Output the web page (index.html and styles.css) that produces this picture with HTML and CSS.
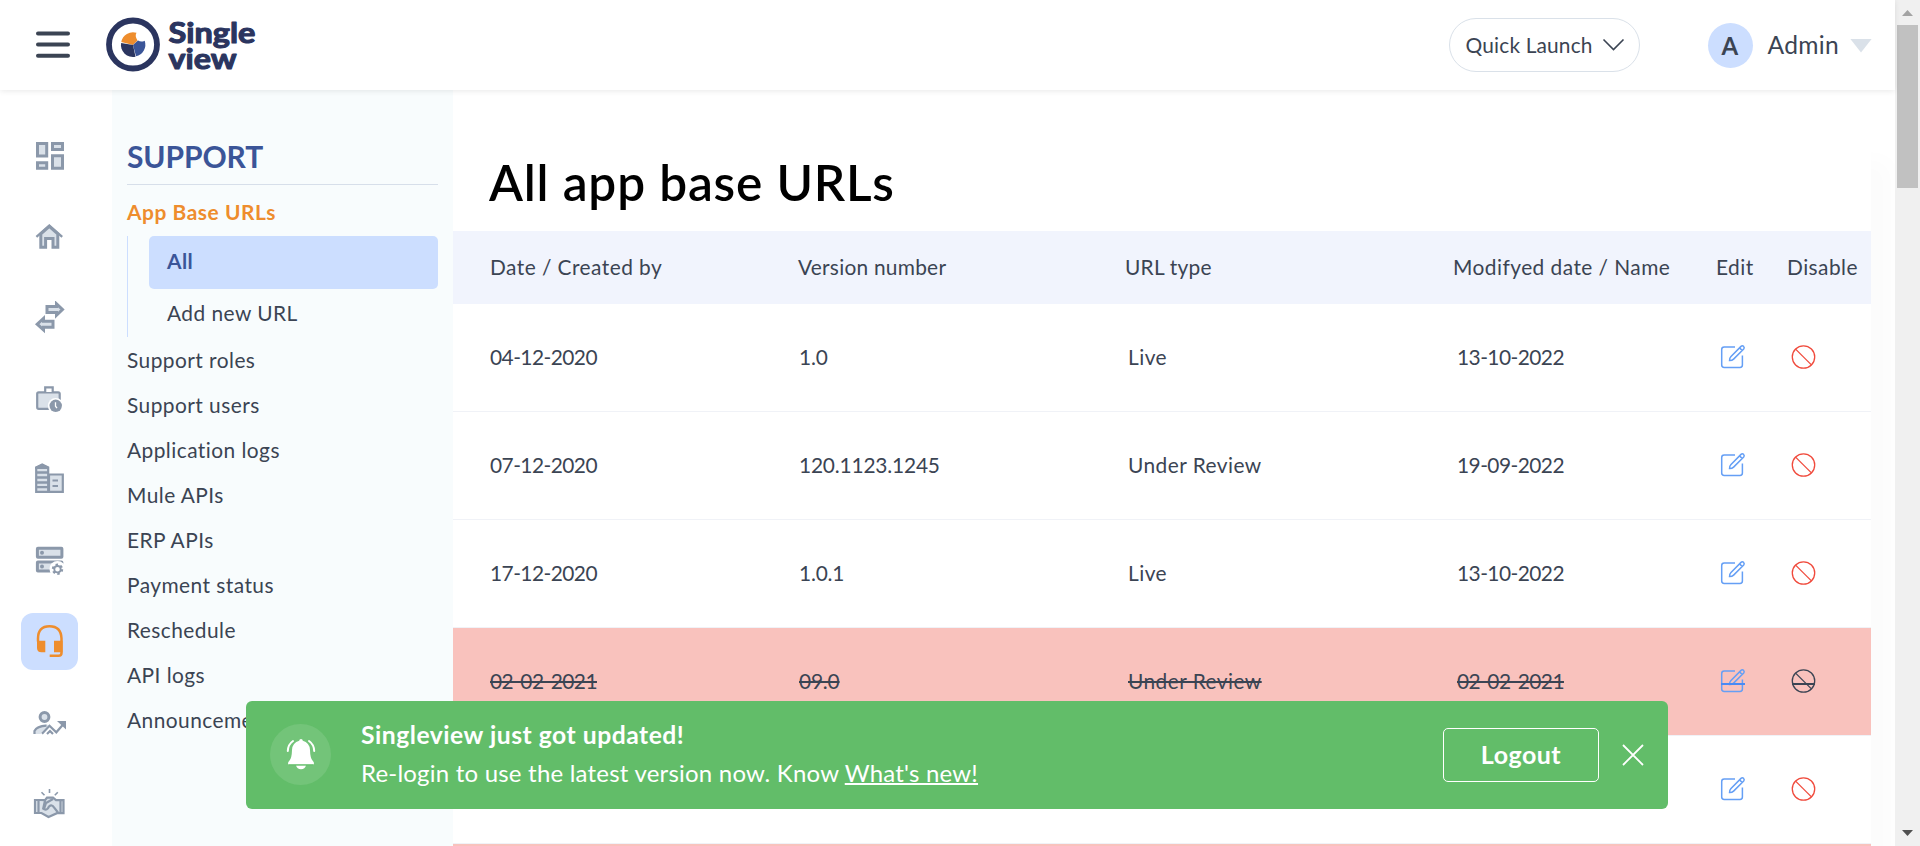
FILE: index.html
```html
<!DOCTYPE html>
<html lang="en">
<head>
<meta charset="utf-8">
<title>Singleview - All app base URLs</title>
<link rel="stylesheet" href="styles.css">
</head>
<body>
<svg class="defs" width="0" height="0">
  <symbol id="edit" viewBox="0 0 26 26">
    <g fill="none" stroke="#659ff5" stroke-width="1.5">
      <path d="M15 3H4.2Q1.7 3 1.7 5.500V21Q1.700 23.400 4.200 23.400H20Q22.400 23.400 22.400 21V11.500"/>
      <path d="M9.500 16.600Q9.400 14.300 11 12.600L21 2.400Q22.300 1.200 23.600 2.400Q24.800 3.700 23.700 5L13.600 15.100Q12 16.700 9.500 16.600zM19.600 3.900L22.200 6.500"/>
    </g>
  </symbol>
  <symbol id="ban" viewBox="0 0 26 26">
    <g fill="none" stroke="currentColor" stroke-width="1.300"><circle cx="12.500" cy="13" r="11.200"/><path d="M4.600 5.100L20.400 20.900"/></g>
  </symbol>
</svg>

<div class="window">
  <div class="page">
    <header class="topbar">
      <svg class="menu" width="36" height="24" viewBox="0 0 36 24"><path d="M3 .4h30M3 11.500h30M3 22.800h30"/></svg>
      <svg class="logo" width="154" height="56" viewBox="0 0 154 56">
        <circle cx="28" cy="27.500" r="24" fill="none" stroke="#2b355f" stroke-width="5.800"/>
        <path d="M28 28L16.300 25A12 12 0 0 1 31.500 15.800Q29.500 19 32.500 23.500z" fill="#ee8d2d"/>
        <path d="M28 28L33 23.500Q36 25.500 39.700 23.700A12 12 0 0 1 31 39.300z" fill="#3b5598"/>
        <path d="M28 28L16.100 26A12 12 0 0 0 30.500 39.700z" fill="#2b355f"/>
        <g class="logo-text"><text x="63.500" y="25.700" textLength="87" lengthAdjust="spacingAndGlyphs">Single</text><text x="63.500" y="51.500" textLength="68" lengthAdjust="spacingAndGlyphs">view</text></g>
      </svg>
      <button class="launch">Quick Launch
        <svg width="23" height="14" viewBox="0 0 23 14"><path d="M1.500 1.500l10 10 10-10"/></svg>
      </button>
      <span class="avatar">A</span>
      <span class="user">Admin</span>
      <span class="caret"></span>
    </header>

    <div class="body">
      <nav class="rail">
        <a><svg viewBox="0 0 33 33"><path d="M4.500 4.500h9.200V17H4.500zM19.500 4.500h10v6h-10zM4.500 23.700h9.200v5.500H4.500zM19.500 16.700h10v12.500h-10z"/></svg></a>
        <a><svg viewBox="0 0 33 33"><path d="M7.800 27.300V14l8.500-7.600 8.500 7.600v13.300H20V18.500h-7.400v8.800z"/><path class="line" d="M3.400 16.800L16.300 5.500l12.900 11.300"/></svg></a>
        <a><svg viewBox="0 0 33 33"><path d="M14 5.600h9.500V2.800l6 5.700-6 5.800v-2.700H14z"/><path d="M20 20.300h-9.500v-2.800l-6.300 5.700 6.300 5.700v-2.700H20z"/></svg></a>
        <a><svg viewBox="0 0 33 33"><rect class="thin" x="4.200" y="10.300" width="22.500" height="16.500" rx="1.500"/><path class="thin" fill="#fff" d="M12.200 10V5.300h7.500V10"/><circle class="dot" cx="22.700" cy="23.800" r="7.800" fill="#fff"/><circle class="solid" cx="22.700" cy="23.800" r="6.200"/><path class="hand" d="M22.500 20.200v4l1.500 2"/></svg></a>
        <a><svg viewBox="0 0 33 33"><path class="thin" d="M3.200 4.500l6-3 6 3v24.300h-12zM16 11.500h13.800v17.300H16z"/><path class="solid" d="M2 4L9 1l7 3v2H2z"/><path class="line" d="M3 9.500h12M3 14.500h12M3 19.500h12M3 24.200h12"/><path class="line thin" d="M19.500 17.500h5.500M19.500 23h5.500"/></svg></a>
        <a><svg viewBox="0 0 33 33"><rect x="4.400" y="4.200" width="24.500" height="9" rx=".5"/><rect x="4.400" y="18" width="24.500" height="9" rx=".5"/><circle class="solid" cx="9" cy="8.800" r="2"/><circle class="solid" cx="9" cy="22.500" r="2"/><circle class="dot white" cx="24.500" cy="25" r="8"/><circle class="gear" cx="24.500" cy="25.200" r="4.600"/><circle class="ring" cx="24.500" cy="25.200" r="3.200"/></svg></a>
        <a class="active"><svg viewBox="0 0 33 33"><path class="head" d="M5 16.500V13.500Q5 1.300 16.500 1.300T28.500 13.500V28Q28.500 30.800 25.500 30.800H16.700"/><path class="ear" d="M4 15.700h8.300v11.500H8.500Q4 27.200 4 23zM21 15.700h8.500v11.500H21z"/></svg></a>
        <a><svg viewBox="0 0 33 33"><circle cx="11.500" cy="11" r="4.400"/><path class="nofill-stroke" d="M.7 28v-3.500Q3.500 19 13 18.500L16 19 7.500 28z"/><path class="line thin" d="M1.500 28v-3q2.500-4.800 12-5.300M9 27.800l7.500-8 6.800 6.500 7-8"/><path class="line thin" d="M14 28l3-3 3 3"/><path class="solid" d="M24 15h9v8.500z"/></svg></a>
        <a><svg viewBox="0 0 33 33"><path class="thin" d="M2 13h5l5 .2 2-2.500h6l3 2.500h7.500v13H24l-8.500 3.800L8.500 26H2z"/><path class="line thin" d="M5.500 13v13M27.500 13v13M12 13.500l-2 9M20 12l-7 4-2 6q3 2 5-2.500 3-2.500 5 1l4 5"/><path class="line fine" d="M16.500 2v4M8.500 5.200l3 3M24.800 5.200l-3 3"/></svg></a>
      </nav>

      <aside class="side">
        <h2>SUPPORT</h2>
        <a class="group">App Base URLs</a>
        <div class="tree"><a class="current">All</a><a class="sub">Add new URL</a></div>
        <a class="item">Support roles</a>
        <a class="item">Support users</a>
        <a class="item">Application logs</a>
        <a class="item">Mule APIs</a>
        <a class="item">ERP APIs</a>
        <a class="item">Payment status</a>
        <a class="item">Reschedule</a>
        <a class="item">API logs</a>
        <a class="item">Announcement</a>
      </aside>

      <main class="content">
        <h1>All app base URLs</h1>
        <div class="row head-row"><span>Date / Created by</span><span class="narrow">Version number</span><span class="narrow">URL type</span><span>Modifyed date / Name</span><span>Edit</span><span>Disable</span></div>
        <div class="row"><span class="date">04-12-2020</span><span class="ver">1.0</span><span>Live</span><span class="date">13-10-2022</span><svg><use href="#edit"/></svg><svg><use href="#ban"/></svg></div>
        <div class="row"><span class="date">07-12-2020</span><span class="ver">120.1123.1245</span><span>Under Review</span><span class="date">19-09-2022</span><svg><use href="#edit"/></svg><svg><use href="#ban"/></svg></div>
        <div class="row"><span class="date">17-12-2020</span><span class="ver">1.0.1</span><span>Live</span><span class="date">13-10-2022</span><svg><use href="#edit"/></svg><svg><use href="#ban"/></svg></div>
        <div class="row disabled"><span class="date"><s>02-02-2021</s></span><span class="ver"><s>09.0</s></span><span><s>Under Review</s></span><span class="date"><s>02-02-2021</s></span><svg><use href="#edit"/><path d="M1 16h24" stroke="#4a8af4" stroke-width="2"/></svg><svg><use href="#ban"/><path d="M1 16h23" stroke="#3b4453" stroke-width="2"/></svg></div>
        <div class="row"><span></span><span></span><span></span><span></span><svg><use href="#edit"/></svg><svg><use href="#ban"/></svg></div>
        <div class="row disabled"></div>
      </main>
    </div>
  </div>

  <div class="scrollbar"><span class="up"></span><span class="thumb"></span><span class="down"></span></div>

  <div class="toast">
    <span class="bell"><svg width="30" height="32" viewBox="0 0 30 32"><path fill="#fff" d="M15 1q1.700 0 1.800 1.800Q23.500 4.500 24 12q.2 8 2.500 10.500 1.500 1.500 1.500 2.800 0 1.200-1.200 1.200H3.200Q2 26.500 2 25.300q0-1.300 1.500-2.800Q5.800 20 6 12q.5-7.500 7.200-9.200Q13.300 1 15 1zM10 27.500h10q-1 3.700-5 3.700t-5-3.700z"/><path fill="none" stroke="#62bd69" stroke-width="1" d="M3 26.900h24"/><path fill="none" stroke="#fff" stroke-width="2" stroke-linecap="round" d="M7 3Q2 6.500 1.800 13M23 3q5 3.500 5.200 10"/></svg></span>
    <div class="message"><strong>Singleview just got updated!</strong><p>Re-login to use the latest version now. Know <a>What's new!</a></p></div>
    <button class="logout">Logout</button>
    <svg class="close" width="22" height="22" viewBox="0 0 22 22"><path d="M1 1l20 20M21 1L1 21"/></svg>
  </div>
</div>
</body>
</html>
```
FILE: styles.css
```css
* { box-sizing: border-box; }
body { margin: 0; background: #fff; color: #3b4453; font: 400 20.900px "Lato", "Noto Sans", sans-serif; letter-spacing: .45px; }
h1, h2, p { margin: 0; }
.defs { display: none; }
.window { position: relative; display: flex; width: 1920px; height: 846px; overflow: hidden; }
.page { display: flex; flex-direction: column; width: 1895px; height: 846px; }

/* Top bar */
.topbar { position: relative; display: flex; align-items: center; flex: none; height: 90px; padding: 0 23px 0 35px; background: #fff; box-shadow: 0 1px 6px rgba(0, 0, 0, .09); }
.menu { overflow: visible; }
.menu path { stroke: #3b4453; stroke-width: 4; stroke-linecap: round; }
.logo { margin: 0 auto 0 34px; overflow: visible; }
.logo-text { font: 700 28.500px "Lato", sans-serif; letter-spacing: 0; fill: #2b355f; stroke: #2b355f; stroke-width: 1.100px; stroke-linejoin: round; }
.launch { display: flex; align-items: center; justify-content: space-between; width: 191px; height: 54px; padding: 0 14px 1px 16px; border: 1px solid #dae1e9; border-radius: 27px; background: #fff; color: inherit; font: inherit; letter-spacing: .15px; }
.launch svg, .close { fill: none; stroke: #3b4453; stroke-width: 1.600; }
.avatar { display: grid; place-items: center; width: 45px; height: 45px; margin: 1px 0 0 68px; border-radius: 50%; background: #ccdeff; font-size: 24px; font-weight: 700; }
.user { margin: -2px 11px 0 15px; font-size: 24.600px; letter-spacing: .28px; }
.caret { width: 22px; height: 14px; margin-top: 1px; background: #dae1e9; clip-path: polygon(0 0, 100% 0, 50% 100%); }

.body { display: flex; flex: 1; min-height: 0; }

/* Icon rail */
.rail { display: flex; flex: none; flex-direction: column; gap: 24px; width: 112px; padding: 37px 0 0 21px; }
.rail a { display: grid; flex: none; place-items: center; width: 57px; height: 57px; border-radius: 12px; }
.rail .active { background: #ccdeff; }
.rail svg { width: 33px; height: 33px; fill: #dae1e9; stroke: #8b98aa; stroke-width: 3; }
.rail .line { fill: none; stroke-width: 2.300; }
.rail .thin { stroke-width: 2.200; }
.rail .fine { stroke-width: 1.600; }
.rail .solid { fill: #8b98aa; stroke: none; }
.rail .dot, .rail .nofill-stroke { stroke: none; }
.rail .white { fill: #fff; }
.rail .hand { fill: none; stroke: #fff; stroke-width: 1.300; }
.rail .gear { fill: none; stroke-width: 2.200; stroke-dasharray: 2.400 2.417; }
.rail .ring { fill: #fff; stroke-width: 1.800; }
.rail .head { fill: none; stroke: #ee8d2d; stroke-width: 2.500; }
.rail .ear { fill: #ee8d2d; stroke: none; }

/* Support menu */
.side { display: flex; flex: none; flex-direction: column; width: 341px; padding: 40px 15px 0; background: #f8fcfd; }
.side h2 { flex: none; height: 55px; padding-top: 1px; border-bottom: 1px solid #d7dfea; color: #3b5598; font-size: 30px; font-weight: 700; line-height: 51px; letter-spacing: -.1px; }
.group { padding-top: 3px; color: #ee8d2d; font-weight: 700; line-height: 48px; letter-spacing: .56px; }
.tree { display: flex; flex-direction: column; padding-left: 21px; border-left: 1px solid #ccdeff; }
.tree a { padding-left: 18px; }
.current { height: 53px; border-radius: 5px; background: #ccdeff; color: #3b5598; font-weight: 700; line-height: 50px; }
.sub { height: 48px; line-height: 47px; }
.item { flex: none; height: 45px; line-height: 45px; }

/* Table */
.content { width: 1418px; overflow: visible; box-shadow: 20px 70px 22px rgba(0, 0, 0, .015); }
h1 { padding: 62px 0 19px 36px; color: #000; font-size: 49.500px; font-weight: 600; line-height: 60px; letter-spacing: .850px; }
.row { display: grid; grid-template-columns: 309px 329px 329px 263px 71px auto; align-items: center; height: 108px; padding: 0 0 1px 37px; border-bottom: 1px solid #f0f2f7; background: #fff; white-space: nowrap; }
.row span { padding-bottom: 2px; }
.head-row { grid-template-columns: 308px 327px 328px 263px 71px auto; height: 73px; border: 0; background: #f1f4fd; }
.narrow { letter-spacing: .24px; }
.row svg { width: 26px; height: 26px; color: #f04a3c; }
.row.disabled { background: #f9c2bd; }
.row.disabled svg { color: #3b4453; }
.date { letter-spacing: -.55px; }
.ver { letter-spacing: -.18px; }
s { text-decoration-thickness: 2px; }

/* Update notice */
.toast { position: absolute; left: 246px; top: 701px; display: flex; align-items: center; width: 1422px; height: 108px; padding: 0 24px; border-radius: 6px; background: #62bd69; color: #fff; font-size: 24px; }
.bell { display: grid; place-items: center; width: 61px; height: 61px; margin-bottom: 2px; border-radius: 50%; background: #73c479; }
.message { margin: -3px auto 0 30px; }
.message strong { display: block; font-size: 24.700px; line-height: 39px; letter-spacing: .510px; }
.message p { line-height: 38px; letter-spacing: .21px; }
.message a { text-decoration: underline; text-decoration-thickness: 2px; }
.logout { width: 156px; height: 54px; padding-bottom: 4px; border: 1px solid #fff; border-radius: 5px; background: none; color: #fff; font: 700 25px "Lato", sans-serif; letter-spacing: .500px; }
.close { margin-left: 23px; stroke: #fff; stroke-width: 1.800; }

/* Scrollbar */
.scrollbar { display: flex; flex-direction: column; align-items: center; width: 25px; padding: 10px 0; background: #f0f0f0; }
.up, .down { width: 11px; height: 6px; background: #a3a3a3; clip-path: polygon(50% 0, 100% 100%, 0 100%); }
.down { margin-top: auto; background: #505050; clip-path: polygon(0 0, 100% 0, 50% 100%); }
.thumb { width: 21px; height: 163px; margin-top: 9px; background: #c1c1c1; }
```
